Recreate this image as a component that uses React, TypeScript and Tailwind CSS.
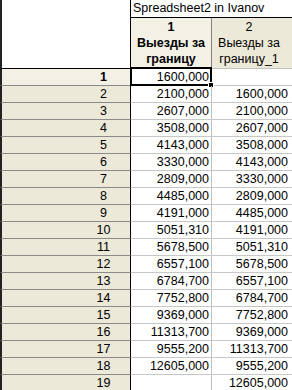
import React from "react";

const col1 = [
  "1600,000", "2100,000", "2607,000", "3508,000", "4143,000", "3330,000",
  "2809,000", "4485,000", "4191,000", "5051,310", "5678,500", "6557,100",
  "6784,700", "7752,800", "9369,000", "11313,700", "9555,200", "12605,000", "",
];
const col2 = ["", ...col1.slice(0, 18)];

export default function App() {
  return (
    <div
      className="w-[292px] h-[390px] overflow-hidden bg-white text-black text-[12.5px] leading-[16px]"
      style={{ fontFamily: '"Liberation Sans", Arial, sans-serif' }}
    >
      {/* Header block */}
      <div className="flex h-[69px]">
        <div className="w-[131px] shrink-0 border-l-2 border-l-[#222] border-r border-r-black border-b border-b-black bg-white" />
        <div className="flex-1 flex flex-col">
          <div className="h-[18px] border-b border-black pl-[2px] whitespace-nowrap leading-[17px]">
            Spreadsheet2 in Ivanov
          </div>
          <div className="flex h-[51px]">
            <div className="w-[81px] shrink-0 bg-[#F3F1E6] border-r border-r-[#808080] border-b border-b-black flex flex-col items-center justify-center font-bold text-center">
              <div>1</div>
              <div className="whitespace-nowrap">Выезды за</div>
              <div>границу</div>
            </div>
            <div className="flex-1 bg-[#ECE9D8] border-b border-b-[#c0c0c0] flex flex-col items-center justify-center text-center pr-[6px]">
              <div>2</div>
              <div className="whitespace-nowrap">Выезды за</div>
              <div className="whitespace-nowrap">границу_1</div>
            </div>
          </div>
        </div>
      </div>

      {/* Rows */}
      {col1.map((v, i) => {
        const selected = i === 0;
        return (
          <div key={i} className="flex h-[17px]">
            <div
              className={
                "w-[131px] shrink-0 flex border-l-2 border-l-[#222] border-r border-r-black border-b border-b-[#8a8a8a] " +
                (selected ? "bg-[#F3F1E6] font-bold" : "bg-[#ECE9D8]")
              }
            >
              <div className="w-[75px] shrink-0" />
              <div className="flex-1 text-center">{i + 1}</div>
            </div>
            <div className="relative w-[81px] shrink-0 border-r border-r-[#c0c0c0] border-b border-b-[#c8c8c8] text-right pr-[2px]">
              {v}
              {selected && (
                <>
                  <div className="absolute left-[-1px] top-[-2px] right-[-1px] bottom-[-1px] border-2 border-black pointer-events-none" />
                  <div className="absolute right-[-3px] bottom-[-3px] w-[6px] h-[6px] bg-black border border-white" />
                </>
              )}
            </div>
            <div className="flex-1 border-b border-b-[#c8c8c8] text-right pr-[4px]">{col2[i]}</div>
          </div>
        );
      })}
    </div>
  );
}
